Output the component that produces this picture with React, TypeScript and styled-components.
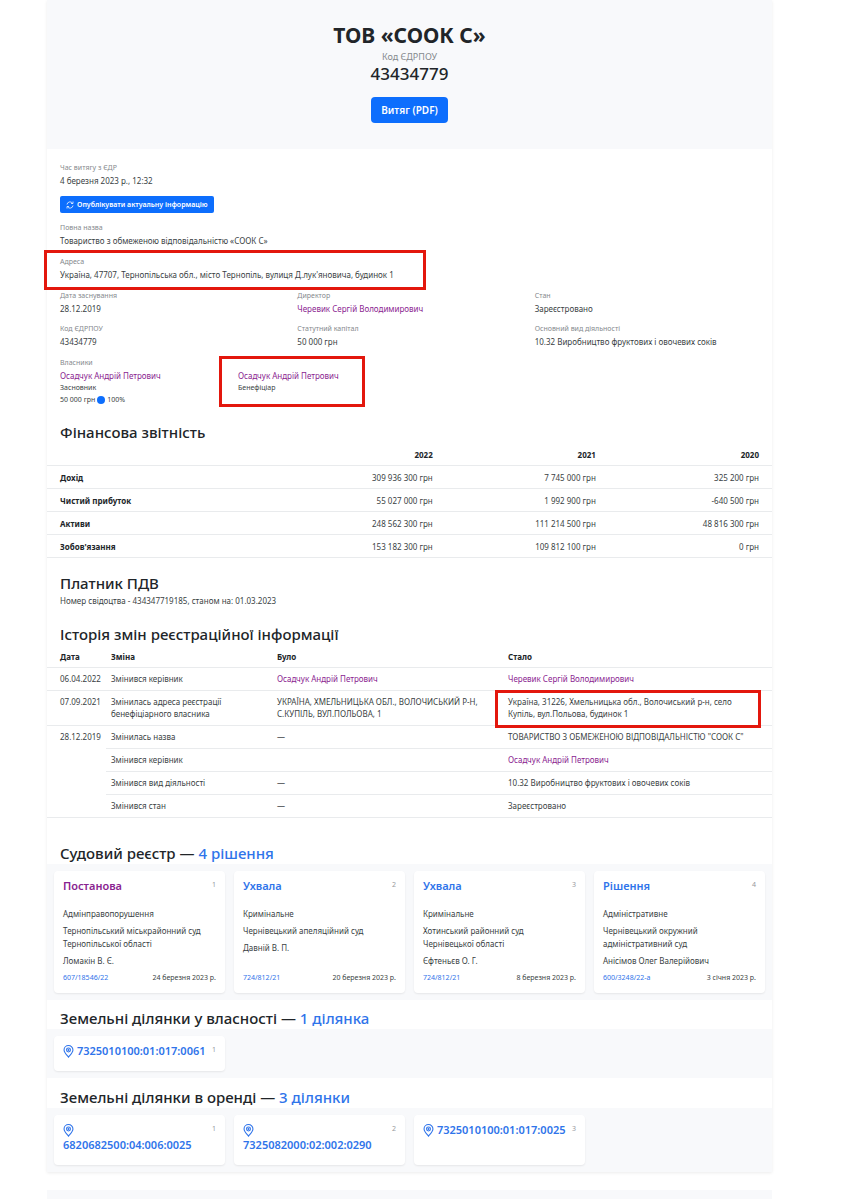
import React from "react";
import styled, { createGlobalStyle, css } from "styled-components";

const GlobalStyle = createGlobalStyle`
  *, *::before, *::after { box-sizing: border-box; }
  body {
    margin: 0;
    background: #fff;
    color: #3a3f44;
    font-family: "Noto Sans", "Open Sans", sans-serif;
    font-size: 8px;
    line-height: 13px;
  }
  h1, h2, h3, p, dl, dd { margin: 0; }
`;

const Page = styled.div`
  margin: 0 79px 0 47px;
`;

const Sheet = styled.main`
  background: #fff;
  box-shadow: 0 1px 3px rgba(0, 0, 0, 0.08);
`;

const Hero = styled.header`
  display: flex;
  flex-direction: column;
  align-items: center;
  padding: 21px 13px 26px;
  background: #f8f9fb;
`;

const Title = styled.h1`
  font-size: 21px;
  line-height: 29px;
  font-weight: 700;
  color: #212529;
`;

const HeroLabel = styled.span`
  font-size: 9px;
  line-height: 14px;
  color: #85898d;
`;

const HeroCode = styled.span`
  font-size: 17px;
  line-height: 20px;
  font-weight: 500;
  color: #212529;
`;

const Button = styled.button<{ $small?: boolean }>`
  display: inline-flex;
  align-items: center;
  justify-content: center;
  gap: 3px;
  border: 0;
  background: #0d6efd;
  color: #fff;
  font-family: inherit;
  font-weight: 600;
  cursor: pointer;
  ${(p) =>
    p.$small
      ? css`
          height: 17px;
          padding: 0 6px;
          border-radius: 2px;
          font-size: 7px;
        `
      : css`
          height: 26px;
          margin-top: 13px;
          padding: 0 10px;
          border-radius: 4px;
          font-size: 10px;
        `}
`;

const Details = styled.dl`
  display: flex;
  flex-direction: column;
  align-items: flex-start;
  gap: 9px;
  padding: 13px 0 0 13px;
`;

const Grid = styled.div<{ $columns: number }>`
  display: grid;
  grid-template-columns: repeat(${(p) => p.$columns}, 1fr);
  align-self: stretch;
  row-gap: 8px;
`;

const Label = styled.dt`
  font-size: 7px;
  line-height: 12px;
  color: #85898d;
`;

const Value = styled.dd`
  line-height: 13px;
`;

const Owners = styled.div`
  align-self: stretch;
`;

const Link = styled.a<{ $visited?: boolean }>`
  color: ${(p) => (p.$visited ? "#8a2390" : "#2f74ea")};
  text-decoration: none;
`;

const Marked = styled.div<{ $inset: string }>`
  position: relative;
  width: fit-content;
  &::after {
    content: "";
    position: absolute;
    inset: ${(p) => p.$inset};
    border: 3px solid #e3170d;
    pointer-events: none;
  }
`;

const MarkedCell = styled(Marked)`
  width: auto;
  padding-right: 18px;
`;

const Small = styled.div`
  display: flex;
  align-items: center;
  gap: 2px;
  font-size: 7px;
  line-height: 12px;
`;

const Dot = styled.span`
  width: 8px;
  height: 8px;
  border-radius: 50%;
  background: #0d6efd;
`;

const Heading = styled.h2<{ $top: number }>`
  padding: ${(p) => p.$top}px 13px 0;
  font-size: 15px;
  line-height: 22px;
  font-weight: 500;
  color: #212529;
`;

const Note = styled.p`
  padding: 0 13px;
`;

const Table = styled.table`
  width: 100%;
  table-layout: fixed;
  border-collapse: separate;
  border-spacing: 0;
  th, td {
    padding: 5px 5px 4px;
    border-bottom: 1px solid #e9ebed;
    text-align: left;
    vertical-align: top;
    font-weight: 400;
  }
  th {
    color: #212529;
    font-weight: 700;
  }
  th:first-child { padding-left: 13px; }
`;

const FinanceTable = styled(Table)`
  th, td { padding-right: 13px; }
  th:not(:first-child), td { text-align: right; }
`;

const HistoryTable = styled(Table)`
  td { padding-bottom: 5px; line-height: 12px; }
  td.date { padding-left: 13px; padding-right: 0; }
`;

const Col = styled.col<{ $width: string }>`
  width: ${(p) => p.$width};
`;

const Band = styled.div`
  display: grid;
  grid-template-columns: repeat(4, 1fr);
  gap: 9px;
  padding: 7px;
  background: #f8f9fb;
`;

const Card = styled.article<{ $plot?: boolean }>`
  display: flex;
  flex-direction: column;
  gap: 4px;
  padding: 7px 9px ${(p) => (p.$plot ? 13 : 9)}px;
  border-radius: 4px;
  background: #fff;
  box-shadow: 0 1px 2px rgba(0, 0, 0, 0.08);
`;

const CardHead = styled.div`
  display: flex;
  align-items: flex-start;
  justify-content: space-between;
  gap: 4px;
`;

const CardTitle = styled.h3`
  font-size: 11px;
  line-height: 15px;
  font-weight: 600;
`;

const Index = styled.span`
  font-size: 7px;
  line-height: 14px;
  color: #96999c;
`;

const CaseBody = styled.div`
  display: flex;
  flex: 1;
  flex-direction: column;
  gap: 4px;
  padding-top: 10px;
`;

const CaseFoot = styled.div`
  display: flex;
  justify-content: space-between;
  font-size: 7px;
`;

const PinIcon = styled.svg<{ $stacked?: boolean }>`
  display: ${(p) => (p.$stacked ? "block" : "inline-block")};
  width: 11px;
  height: 13px;
  margin-top: ${(p) => (p.$stacked ? 2 : 0)}px;
  vertical-align: -3px;
`;

const PageEnd = styled.footer`
  height: 9px;
  margin-top: 18px;
  background: #f8f9fb;
`;

const Refresh = () => (
  <svg width="8" height="8" viewBox="0 0 16 16" fill="none" stroke="currentColor" strokeWidth="1.500" aria-hidden="true">
    <path d="M2 7a6 6 0 0 1 11-2.500M14 9a6 6 0 0 1-11 2.500" />
    <path d="M14 1v4h-4M2 15v-4h4" />
  </svg>
);

const Pin = ({ stacked }: { stacked?: boolean }) => (
  <PinIcon $stacked={stacked} viewBox="0 0 20 24" fill="none" stroke="currentColor" strokeWidth="2" aria-hidden="true">
    <path d="M10 22.500C6 17.500 1.800 13.500 1.800 9.200a8.200 8.200 0 0 1 16.400 0c0 4.300-4.200 8.300-8.200 13.300z" />
    <circle cx="10" cy="9.200" r="3.600" />
    <circle cx="10" cy="9.200" r="0.800" />
  </PinIcon>
);

const Person = ({ name }: { name: string }) => (
  <Link href="#person" $visited>{name}</Link>
);

const Field = ({ label, children }: { label: string; children: React.ReactNode }) => (
  <div>
    <Label>{label}</Label>
    <Value>{children}</Value>
  </div>
);

const DIRECTOR = "Черевик Сергій Володимирович";
const OWNER = "Осадчук Андрій Петрович";

const finance = [
  ["Дохід", "309 936 300 грн", "7 745 000 грн", "325 200 грн"],
  ["Чистий прибуток", "55 027 000 грн", "1 992 900 грн", "-640 500 грн"],
  ["Активи", "248 562 300 грн", "111 214 500 грн", "48 816 300 грн"],
  ["Зобов'язання", "153 182 300 грн", "109 812 100 грн", "0 грн"],
];

const cases = [
  { title: "Постанова", visited: true, kind: "Адмінправопорушення", court: "Тернопільський міськрайонний суд Тернопільської області", judge: "Ломакін В. Є.", id: "607/18546/22", date: "24 березня 2023 р." },
  { title: "Ухвала", kind: "Кримінальне", court: "Чернівецький апеляційний суд", judge: "Давній В. П.", id: "724/812/21", date: "20 березня 2023 р." },
  { title: "Ухвала", kind: "Кримінальне", court: "Хотинський районний суд Чернівецької області", judge: "Єфтеньєв О. Г.", id: "724/812/21", date: "8 березня 2023 р." },
  { title: "Рішення", kind: "Адміністративне", court: "Чернівецький окружний адміністративний суд", judge: "Анісімов Олег Валерійович", id: "600/3248/22-а", date: "3 січня 2023 р." },
];

interface Plot {
  number: string;
  stacked?: boolean;
}

const ownedPlots: Plot[] = [{ number: "7325010100:01:017:0061" }];

const rentedPlots: Plot[] = [
  { number: "6820682500:04:006:0025", stacked: true },
  { number: "7325082000:02:002:0290", stacked: true },
  { number: "7325010100:01:017:0025" },
];

const Plots = ({ items }: { items: Plot[] }) => (
  <Band>
    {items.map((plot, i) => (
      <Card key={plot.number} $plot>
        <CardHead>
          <CardTitle>
            <Link href="#plot"><Pin stacked={plot.stacked} /> {plot.number}</Link>
          </CardTitle>
          <Index>{i + 1}</Index>
        </CardHead>
      </Card>
    ))}
  </Band>
);

export default function App() {
  return (
    <>
      <GlobalStyle />
      <Page>
        <Sheet>
          <Hero>
            <Title>ТОВ «СООК С»</Title>
            <HeroLabel>Код ЄДРПОУ</HeroLabel>
            <HeroCode>43434779</HeroCode>
            <Button type="button">Витяг (PDF)</Button>
          </Hero>

          <Details>
            <Field label="Час витягу з ЄДР">4 березня 2023 р., 12:32</Field>
            <Button type="button" $small><Refresh />Опублікувати актуальну інформацію</Button>
            <Field label="Повна назва">Товариство з обмеженою відповідальністю «СООК С»</Field>
            <Marked $inset="-6px -32px -9px -16px">
              <Field label="Адреса">Україна, 47707, Тернопільська обл., місто Тернопіль, вулиця Д.лук'яновича, будинок 1</Field>
            </Marked>
            <Grid $columns={3}>
              <Field label="Дата заснування">28.12.2019</Field>
              <Field label="Директор"><Person name={DIRECTOR} /></Field>
              <Field label="Стан">Зареєстровано</Field>
              <Field label="Код ЄДРПОУ">43434779</Field>
              <Field label="Статутний капітал">50 000 грн</Field>
              <Field label="Основний вид діяльності">10.32 Виробництво фруктових і овочевих соків</Field>
            </Grid>
            <Owners>
              <Label>Власники</Label>
              <Grid as="dd" $columns={4}>
                <div>
                  <Person name={OWNER} />
                  <Small>Засновник</Small>
                  <Small>50 000 грн <Dot /> 100%</Small>
                </div>
                <div>
                  <Marked $inset="-13px -26px -13px -19px">
                    <Person name={OWNER} />
                    <Small>Бенефіціар</Small>
                  </Marked>
                </div>
              </Grid>
            </Owners>
          </Details>

          <Heading $top={15}>Фінансова звітність</Heading>
          <FinanceTable>
            <colgroup><Col $width="32.500%" /><Col $width="22.500%" /><Col $width="22.500%" /><Col $width="22.500%" /></colgroup>
            <thead>
              <tr><th aria-label="Показник" /><th>2022</th><th>2021</th><th>2020</th></tr>
            </thead>
            <tbody>
              {finance.map(([name, ...sums]) => (
                <tr key={name}>
                  <th scope="row">{name}</th>
                  {sums.map((s) => <td key={s}>{s}</td>)}
                </tr>
              ))}
            </tbody>
          </FinanceTable>

          <Heading $top={14}>Платник ПДВ</Heading>
          <Note>Номер свідоцтва - 434347719185, станом на: 01.03.2023</Note>

          <Heading $top={16}>Історія змін реєстраційної інформації</Heading>
          <HistoryTable>
            <colgroup><Col $width="59px" /><Col $width="166px" /><Col $width="231px" /><col /></colgroup>
            <thead>
              <tr><th>Дата</th><th>Зміна</th><th>Було</th><th>Стало</th></tr>
            </thead>
            <tbody>
              <tr>
                <td className="date">06.04.2022</td>
                <td>Змінився керівник</td>
                <td><Person name={OWNER} /></td>
                <td><Person name={DIRECTOR} /></td>
              </tr>
              <tr>
                <td className="date">07.09.2021</td>
                <td>Змінилась адреса реєстрації бенефіціарного власника</td>
                <td>УКРАЇНА, ХМЕЛЬНИЦЬКА ОБЛ., ВОЛОЧИСЬКИЙ Р-Н, С.КУПІЛЬ, ВУЛ.ПОЛЬОВА, 1</td>
                <td>
                  <MarkedCell $inset="-6px 6px -8px -13px">
                    Україна, 31226, Хмельницька обл., Волочиський р-н, село Купіль, вул.Польова, будинок 1
                  </MarkedCell>
                </td>
              </tr>
              <tr>
                <td className="date" rowSpan={4}>28.12.2019</td>
                <td>Змінилась назва</td>
                <td>—</td>
                <td>ТОВАРИСТВО З ОБМЕЖЕНОЮ ВІДПОВІДАЛЬНІСТЮ "СООК С"</td>
              </tr>
              <tr><td>Змінився керівник</td><td /><td><Person name={OWNER} /></td></tr>
              <tr><td>Змінився вид діяльності</td><td>—</td><td>10.32 Виробництво фруктових і овочевих соків</td></tr>
              <tr><td>Змінився стан</td><td>—</td><td>Зареєстровано</td></tr>
            </tbody>
          </HistoryTable>

          <Heading $top={24}>Судовий реєстр — <Link href="#cases">4 рішення</Link></Heading>
          <Band>
            {cases.map((c, i) => (
              <Card key={c.title + i}>
                <CardHead>
                  <CardTitle><Link href="#case" $visited={c.visited}>{c.title}</Link></CardTitle>
                  <Index>{i + 1}</Index>
                </CardHead>
                <CaseBody>
                  <p>{c.kind}</p>
                  <p>{c.court}</p>
                  <p>{c.judge}</p>
                </CaseBody>
                <CaseFoot>
                  <Link href="#case">{c.id}</Link>
                  <span>{c.date}</span>
                </CaseFoot>
              </Card>
            ))}
          </Band>

          <Heading $top={7}>Земельні ділянки у власності — <Link href="#owned">1 ділянка</Link></Heading>
          <Plots items={ownedPlots} />

          <Heading $top={8}>Земельні ділянки в оренді — <Link href="#rented">3 ділянки</Link></Heading>
          <Plots items={rentedPlots} />
        </Sheet>
        <PageEnd />
      </Page>
    </>
  );
}
